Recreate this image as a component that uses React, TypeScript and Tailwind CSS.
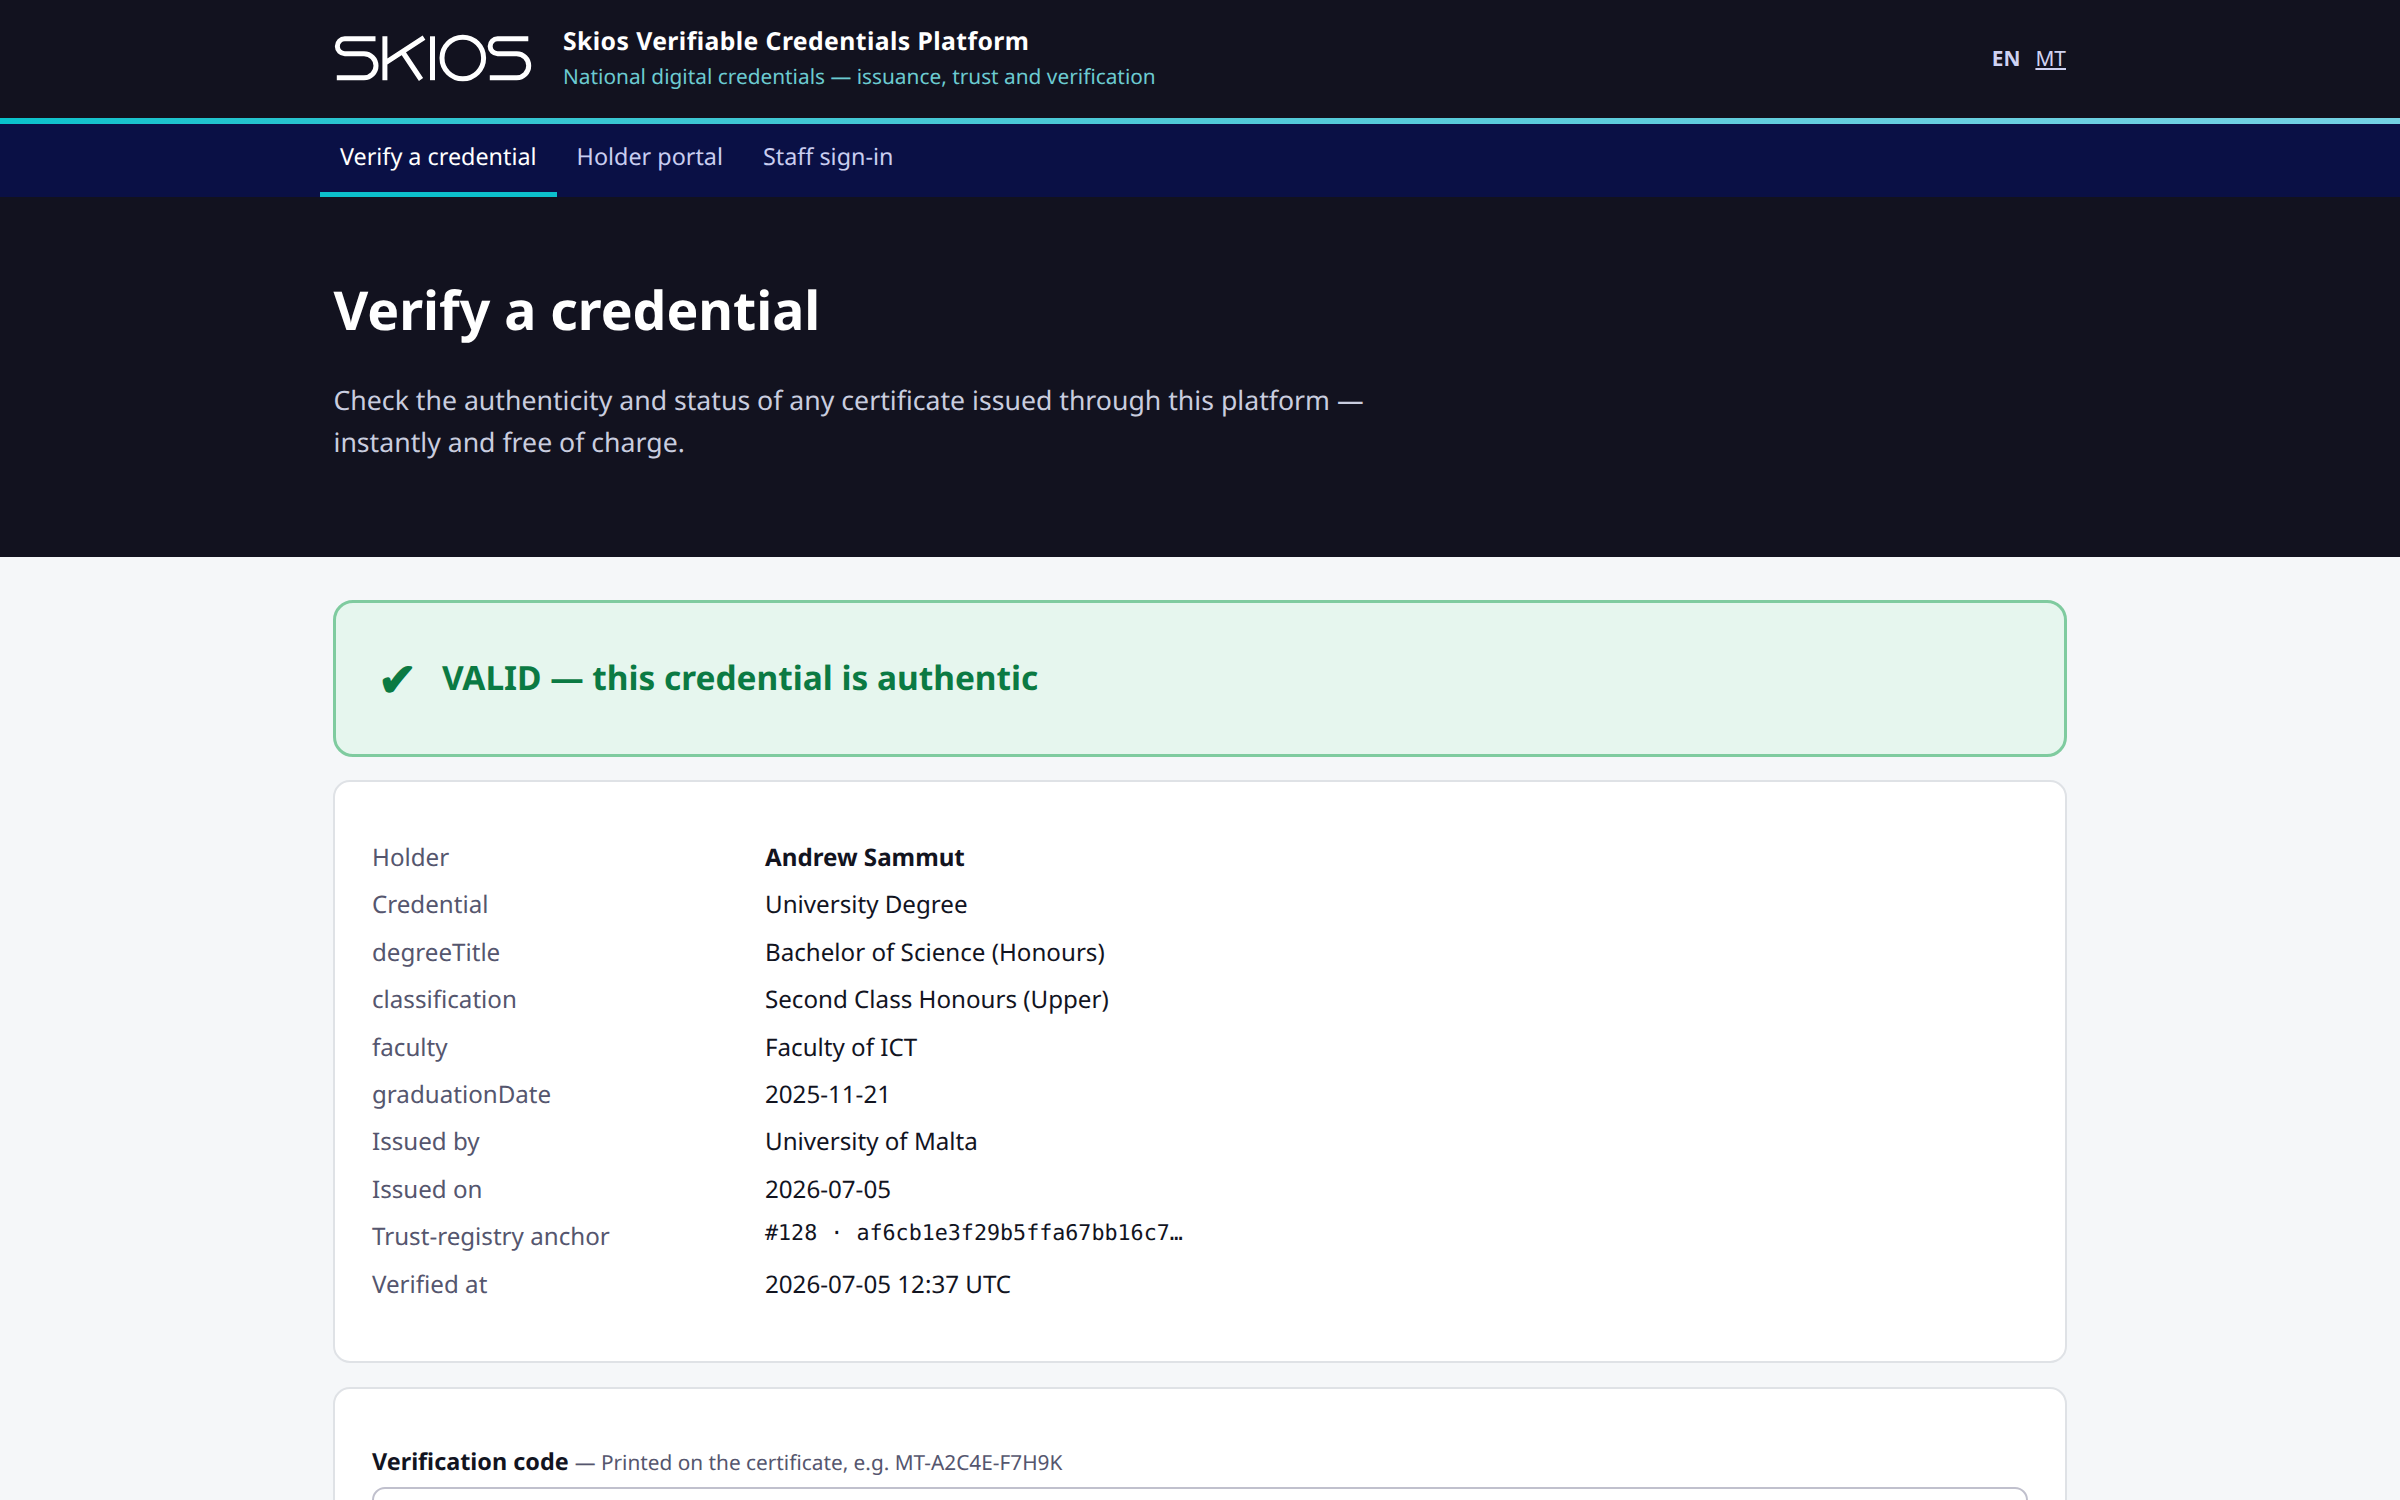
import React from "react";

const navItems = ["Verify a credential", "Holder portal", "Staff sign-in"];

const details: { label: string; value: string; bold?: boolean; mono?: boolean }[] = [
  { label: "Holder", value: "Andrew Sammut", bold: true },
  { label: "Credential", value: "University Degree" },
  { label: "degreeTitle", value: "Bachelor of Science (Honours)" },
  { label: "classification", value: "Second Class Honours (Upper)" },
  { label: "faculty", value: "Faculty of ICT" },
  { label: "graduationDate", value: "2025-11-21" },
  { label: "Issued by", value: "University of Malta" },
  { label: "Issued on", value: "2026-07-05" },
  { label: "Trust-registry anchor", value: "#128 · af6cb1e3f29b5ffa67bb16c7…", mono: true },
  { label: "Verified at", value: "2026-07-05 12:37 UTC" },
];

function Logo() {
  return (
    <svg
      width="198"
      height="48"
      viewBox="334.5 34 198 48"
      fill="none"
      stroke="#fff"
      strokeWidth="5"
      role="img"
      aria-label="Skios"
    >
      <path d="M376 38.8H345.3a7.45 7.45 0 0 0 0 14.9H364.5a12 12 0 0 1 0 24H337.3" />
      <path d="M385.4 36.3V80.2M386.5 62.3L424.5 37.6M402.5 51L421.5 79.5" />
      <path d="M433 36.3V80.2" />
      <circle cx="463.3" cy="58" r="20.8" />
      <path d="M528.8 38.8H498.1a7.45 7.45 0 0 0 0 14.9H517.2a12 12 0 0 1 0 24H490.3" />
    </svg>
  );
}

function Header() {
  return (
    <header className="bg-[#12121f]">
      <div className="mx-auto flex h-[118px] w-[1732px] items-center justify-between">
        <div className="flex items-center gap-[31px] pb-[2px]">
          <Logo />
          <div>
            <p className="h-[39px] text-[24.74px] leading-[40px] font-bold tracking-[0.42px] text-white">
              Skios Verifiable Credentials Platform
            </p>
            <p className="h-[33px] text-[20.84px] leading-[33px] text-[#6ccbd1]">
              National digital credentials — issuance, trust and verification
            </p>
          </div>
        </div>
        <div className="flex gap-[15px] pt-[2px] text-[20.9px] text-[#cfd2f2]">
          <span className="font-bold">EN</span>
          <a href="#" className="underline">
            MT
          </a>
        </div>
      </div>
      <div className="h-[6px] bg-linear-to-r from-[#08c2cc] to-[#74d2e4]" />
    </header>
  );
}

function Nav() {
  return (
    <nav className="h-[73px] bg-[#0a1045]">
      <div className="mx-auto flex h-full w-[1760px]">
        {navItems.map((item, i) => (
          <a
            key={item}
            href="#"
            className={
              i === 0
                ? "border-b-[5px] border-[#0cc0cc] px-[20px] pt-[12px] text-[23.35px] leading-[40px] text-white"
                : "border-b-[5px] border-transparent px-[20px] pt-[12px] text-[23.35px] leading-[40px] text-[#c9cdf0]"
            }
          >
            {item}
          </a>
        ))}
      </div>
    </nav>
  );
}

function App() {
  return (
    <div className="h-[1500px] overflow-hidden bg-[#f5f7f9] font-['Noto_Sans',sans-serif] text-[#12141f] [text-rendering:geometricPrecision]">
      <Header />
      <Nav />
      <section className="h-[360px] bg-[#12121f] pt-[79px]">
        <div className="mx-auto w-[1733px]">
          <h1 className="text-[53.5px] leading-[68px] font-bold text-white">Verify a credential</h1>
          <p className="mt-[35px] w-[1080px] text-[26.67px] leading-[42px] text-[#c9cddf]">
            Check the authenticity and status of any certificate issued through this platform — instantly
            and free of charge.
          </p>
        </div>
      </section>
      <main className="mx-auto flex w-[1734px] flex-col pt-[43px]">
        <div className="flex h-[157px] items-center gap-[25px] rounded-[20px] border-[3px] border-[#7fcb9f] bg-[#e6f6ee] pb-[2px] pl-[42px] font-bold text-[#0b7a43]">
          <span className="pt-px text-[46.4px] leading-none">✔</span>
          <span className="text-[33.43px]">VALID — this credential is authentic</span>
        </div>
        <div className="mt-[23px] h-[583px] rounded-[17px] border-2 border-[#dfe2e6] bg-white px-[37px] pt-[55px]">
          <dl className="text-[24.15px] leading-[41px]">
            {details.map((row) => (
              <div key={row.label} className="grid h-[47.4px] grid-cols-[393px_1fr]">
                <dt className="text-[#55566e]">{row.label}</dt>
                {row.mono ? (
                  <dd className="font-['DejaVu_Sans_Mono',monospace] text-[21.7px] leading-[35px]">{row.value}</dd>
                ) : (
                  <dd className={row.bold ? "font-bold" : ""}>{row.value}</dd>
                )}
              </div>
            ))}
          </dl>
        </div>
        <div className="mt-[24px] h-[400px] shrink-0 rounded-[17px] border-2 border-[#dfe2e6] bg-white px-[37px] pt-[52px]">
          <label className="block h-[46px] text-[23.38px] leading-[41px] font-bold">
            Verification code{" "}
            <span className="text-[20.8px] font-normal text-[#55566e]">
              — Printed on the certificate, e.g. MT-A2C4E-F7H9K
            </span>
          </label>
          <input className="block h-[70px] w-full rounded-[13px] border-2 border-[#c0c0cd] bg-white" />
        </div>
      </main>
    </div>
  );
}

export default App;
